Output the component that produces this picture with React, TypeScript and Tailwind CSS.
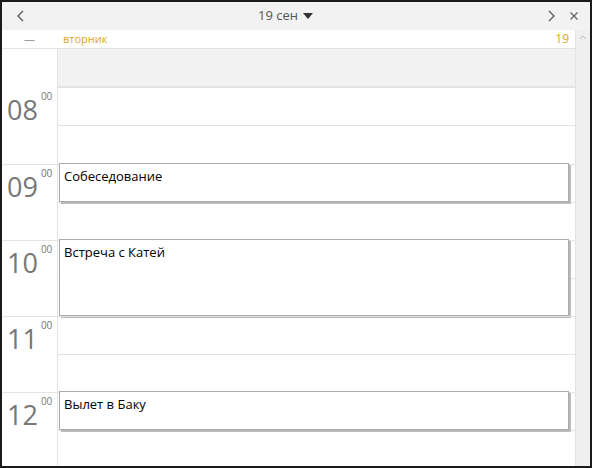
const hours = ["08", "09", "10", "11", "12"];
const events: Record<string, { title: string; h: number }> = {
  "09": { title: "Собеседование", h: 39 },
  "10": { title: "Встреча с Катей", h: 77 },
  "12": { title: "Вылет в Баку", h: 39 },
};

export default function App() {
  return (
    <div className="w-[592px] h-[468px] border-2 border-[#1a1a1a] bg-white flex flex-col overflow-hidden" style={{ fontFamily: '"Open Sans", "Noto Sans", sans-serif' }}>
      <div className="h-[28px] shrink-0 bg-[#f2f2f2] flex items-center px-2 text-[#555]">
        <svg width="14" height="14" viewBox="0 0 14 14" className="ml-[4px]"><path d="M9 2 L4 7 L9 12" fill="none" stroke="#555" strokeWidth="1.3" /></svg>
        <div className="flex-1 flex items-center justify-center gap-1 text-[13px] text-[#555]">
          19 сен
          <svg width="12" height="10" viewBox="0 0 12 10"><path d="M1 2 L11 2 L6 8 Z" fill="#333" /></svg>
        </div>
        <svg width="14" height="14" viewBox="0 0 14 14"><path d="M5 2 L10 7 L5 12" fill="none" stroke="#555" strokeWidth="1.3" /></svg>
        <svg width="12" height="12" viewBox="0 0 12 12" className="ml-[10px] mr-[2px]"><path d="M2.5 2.5 L9.5 9.5 M9.5 2.5 L2.5 9.5" stroke="#666" strokeWidth="1.3" /></svg>
      </div>
      <div className="flex flex-1 min-h-0">
        <div className="flex-1 flex flex-col min-w-0">
          <div className="flex h-[19px] shrink-0 border-b border-[#e3e3e3]">
            <div className="w-[55px] shrink-0 flex justify-center items-center text-[#999] text-[11px]">—</div>
            <div className="flex-1 flex items-center justify-between px-[6px] text-[11px] text-[#e0a526]">
              <span>вторник</span>
              <span className="text-[12px]">19</span>
            </div>
          </div>
          <div className="flex h-[39px] shrink-0">
            <div className="w-[56px] shrink-0 border-r border-[#e3e3e3]" />
            <div className="flex-1 bg-[#f2f2f2] border-b-2 border-[#e3e3e3]" />
          </div>
          {hours.map((h, i) => (
            <div key={h} className="flex h-[76px] shrink-0">
              <div className={`w-[56px] shrink-0 border-r border-[#e3e3e3] pl-[5px] ${i > 0 ? "border-t border-[#e3e3e3]" : ""}`}>
                <div className="flex items-start text-[#777] mt-[1px]">
                  <span className="text-[27px] leading-[36px] mt-[3px]">{h}</span>
                  <span className="text-[10px] ml-[3px] mt-[0px]">00</span>
                </div>
              </div>
              <div className={`flex-1 relative flex flex-col ${i > 0 ? "border-t border-[#e3e3e3]" : ""}`}>
                <div className="h-[38px] border-b border-[#e3e3e3]" />
                <div className="flex-1" />
                {events[h] && (
                  <div
                    className="absolute left-[1px] right-[6px] top-[-2px] bg-white border border-[#aaa] shadow-[2px_2px_0_#bbb] px-[4px] py-[3px] text-[13px] text-black"
                    style={{ height: events[h].h }}
                  >
                    {events[h].title}
                  </div>
                )}
              </div>
            </div>
          ))}
        </div>
        <div className="w-[15px] shrink-0 bg-[#efefef] border-l border-[#e3e3e3] flex justify-center pt-[4px]">
          <svg width="8" height="6" viewBox="0 0 8 6"><path d="M1 5 L4 2 L7 5" fill="none" stroke="#bbb" strokeWidth="1" /></svg>
        </div>
      </div>
    </div>
  );
}
